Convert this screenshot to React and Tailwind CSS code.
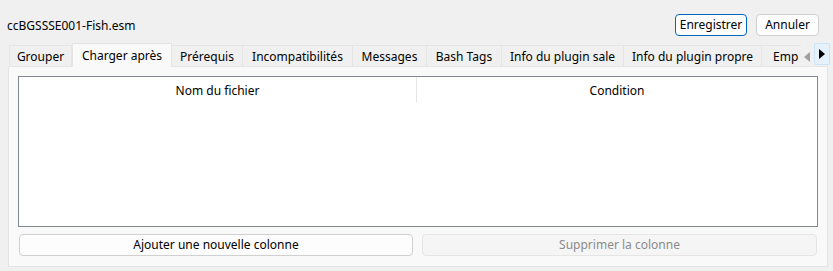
import React from "react";

const tabs = [
  { label: "Grouper", w: 63 },
  { label: "Charger après", w: 100, active: true },
  { label: "Prérequis", w: 71 },
  { label: "Incompatibilités", w: 110 },
  { label: "Messages", w: 74 },
  { label: "Bash Tags", w: 75 },
  { label: "Info du plugin sale", w: 122 },
  { label: "Info du plugin propre", w: 138 },
  { label: "Emp", w: 60, last: true },
];

export default function App() {
  return (
    <div
      className="w-[833px] h-[271px] bg-[#f0f0f0] text-[12px] text-[#000] flex flex-col overflow-hidden"
      style={{ fontFamily: '"Noto Sans", "Open Sans", sans-serif' }}
    >
      {/* Top bar */}
      <div className="flex items-center justify-between pl-[7px] pr-[14px] pt-[14px] h-[36px]">
        <span className="leading-none pt-[1px]">ccBGSSSE001-Fish.esm</span>
        <div className="flex gap-[9px]">
          <button className="w-[72px] h-[22px] rounded-[4px] border border-[#0067c0] bg-[#fdfdfd] leading-none">
            Enregistrer
          </button>
          <button className="w-[63px] h-[22px] rounded-[4px] border border-[#d0d0d0] bg-[#fdfdfd] leading-none">
            Annuler
          </button>
        </div>
      </div>

      {/* Tabs */}
      <div className="relative h-[31px] pt-[7px]">
        <div className="ml-[9px] w-[792px] h-[24px] overflow-hidden flex items-end">
          {tabs.map((t) => (
            <div
              key={t.label}
              style={{ width: t.w }}
              className={
                t.active
                  ? "shrink-0 h-[24px] bg-[#f9f9f9] border border-b-0 border-[#e5e5e5] flex items-center justify-center relative z-10"
                  : t.last
                  ? "shrink-0 h-[22px] bg-[#f0f0f0] border border-l-0 border-r-0 border-[#e5e5e5] flex items-center justify-start pl-[11px] pt-[1px]"
                  : "shrink-0 h-[22px] bg-[#f0f0f0] border border-l-0 border-[#e5e5e5] first:border-l flex items-center justify-center pt-[1px] whitespace-nowrap"
              }
            >
              <span className="whitespace-nowrap leading-none">{t.label}</span>
            </div>
          ))}
        </div>
        {/* scroll arrows */}
        <div className="absolute left-[804px] top-[16px]">
          <svg width="6" height="10" viewBox="0 0 6 10">
            <polygon points="6,0 6,10 0,5" fill="#a0a0a0" />
          </svg>
        </div>
        <div className="absolute left-[814px] top-[7px] w-[16px] h-[22px] bg-[#e5f1fb] border border-[#cce4f7] rounded-[2px] flex items-center justify-center">
          <svg width="6" height="10" viewBox="0 0 6 10">
            <polygon points="0,0 6,5 0,10" fill="#000" />
          </svg>
        </div>
      </div>

      {/* Panel */}
      <div className="mx-[8px] mr-[5px] h-[201px] -mt-[1px] bg-[#f9f9f9] border border-[#e5e5e5] px-[9px] pt-[9px] flex flex-col">
        <div className="h-[151px] bg-white border border-[#828790] flex flex-col">
          <div className="flex h-[25px]">
            <div className="w-[398px] flex items-center justify-center border-r border-[#e5e5e5] pt-[3px]">
              Nom du fichier
            </div>
            <div className="flex-1 flex items-center justify-center pt-[3px]">Condition</div>
          </div>
        </div>
        <div className="flex gap-[9px] px-[1px] mt-[7px]">
          <button className="w-[394px] h-[22px] rounded-[4px] border border-[#d0d0d0] bg-[#fdfdfd] leading-none">
            Ajouter une nouvelle colonne
          </button>
          <button className="flex-1 h-[22px] rounded-[4px] border border-[#e5e5e5] bg-[#f5f5f5] text-[#8b8b8b] leading-none">
            Supprimer la colonne
          </button>
        </div>
      </div>
    </div>
  );
}
